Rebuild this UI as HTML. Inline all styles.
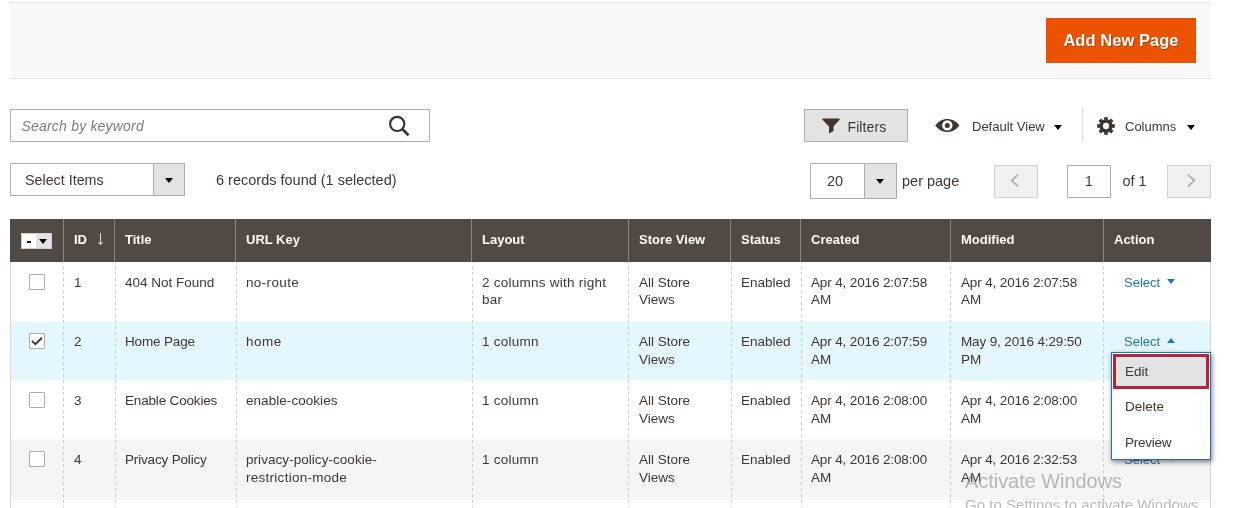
<!DOCTYPE html>
<html>
<head>
<meta charset="utf-8">
<style>
*{box-sizing:border-box;margin:0;padding:0}
html,body{width:1236px;height:508px;overflow:hidden;background:#fff}
body{font-family:"Liberation Sans",sans-serif;font-size:13px;color:#41362f;position:relative}
.abs{position:absolute;white-space:nowrap}
.topbar{left:10px;top:2px;width:1201px;height:77px;background:#f8f8f8;border-top:1px solid #e3e3e3;border-bottom:1px solid #e3e3e3}
.addbtn{left:1046px;top:18px;width:150px;height:45px;background:#eb5202;color:#fff;font-weight:bold;font-size:16.5px;line-height:45px;text-align:center;letter-spacing:.05px;text-shadow:1px 1px 0 rgba(0,0,0,.25)}
.search{left:10px;top:109px;width:420px;height:33px;border:1px solid #adadad;background:#fff}
.search span{position:absolute;left:10.5px;top:8px;font-style:italic;font-size:14px;color:#7f7c7a;letter-spacing:.2px}
.filters{left:804px;top:109px;width:104px;height:33px;background:#e3e3e3;border:1px solid #adadad}
.filters span{position:absolute;left:42.5px;top:8.5px;font-size:14px;color:#41362f;letter-spacing:.1px}
.t13{font-size:13px;color:#41362f}
.sep{left:1082px;top:109px;width:1px;height:33px;background:#dedede}
.selitems{left:10px;top:163px;width:175px;height:33px;border:1px solid #adadad;background:#fff}
.selitems .lbl{position:absolute;left:14px;top:7.5px;font-size:14.3px}
.selitems .car{position:absolute;right:0;top:0;width:31px;height:31px;background:#e3e3e3;border-left:1px solid #adadad}
.pp{left:810px;top:163px;width:87px;height:36px;border:1px solid #adadad;background:#fff}
.pp .lbl{position:absolute;left:16px;top:9px;font-size:14.5px}
.pp .car{position:absolute;right:0;top:0;width:32px;height:34px;background:#e3e3e3;border-left:1px solid #adadad}
.tri{position:absolute;width:0;height:0;border-left:4px solid transparent;border-right:4px solid transparent;border-top:5px solid #000}
.navbtn{top:165px;width:44px;height:33px;background:#f0f0f0;border:1px solid #d0d0d0}
.pginput{left:1067px;top:165px;width:44px;height:33px;border:1px solid #adadad;background:#fff;text-align:center;line-height:31px;font-size:14px}
.thead{left:10px;top:219px;width:1201px;height:43px;background:#514943}
.th{top:219px;height:43px;line-height:41px;color:#fff;font-weight:bold;font-size:13px;border-left:1px solid #8a837f;padding-left:10px}
.row{left:10px;width:1201px;height:59px}
.vline{top:262px;width:1px;height:246px;background:linear-gradient(to bottom,#cbcbcb 0,#cbcbcb 3px,transparent 3px,transparent 6px);background-size:1px 6px;background-position:0 -2px}
.vsolid{top:262px;width:1px;height:246px;background:#d6d6d6}
.c{font-size:13.5px;line-height:17px;color:#41362f;white-space:nowrap}
.cb{left:29px;width:16px;height:16px;border:1px solid #adadad;background:#fff;border-radius:1px}
.link{color:#2273b8;font-size:13px}
.menu{left:1111px;top:352px;width:100px;height:108px;background:#fff;border:1px solid #2270b5;box-shadow:1px 2px 5px rgba(0,0,0,.5)}
.mitem{left:1112px;width:98px;height:35px}
.wm1{left:965px;top:470px;font-size:19.9px;color:rgba(135,135,135,.58)}
.wm2{left:965px;top:496.4px;font-size:15.05px;color:rgba(135,135,135,.58)}
</style>
</head>
<body>
<div id="wrap" style="position:absolute;left:0;top:0;width:1236px;height:508px;will-change:transform">
<div class="abs topbar"></div>
<div class="abs addbtn">Add New Page</div>

<div class="abs search"><span>Search by keyword</span>
<svg style="position:absolute;left:377px;top:5px" width="24" height="24" viewBox="0 0 24 24"><circle cx="9.2" cy="8.9" r="7.1" fill="none" stroke="#41362f" stroke-width="2.2"/><path d="M14.2 14 L20.5 20.3" stroke="#41362f" stroke-width="2.8"/></svg>
</div>

<div class="abs filters"><svg style="position:absolute;left:17px;top:8px" width="18" height="16" viewBox="0 0 18 16"><path d="M0.9 0.6 H17.1 Q18.2 0.8 17.5 1.8 L11.5 8.6 V13 L7 15.4 V8.6 L0.5 1.8 Q-0.2 0.8 0.9 0.6 Z" fill="#41362f"/></svg><span>Filters</span></div>

<svg class="abs" style="left:935px;top:119px" width="25" height="13" viewBox="0 0 25 13"><path d="M0.2 6.5 C3.5 2 8 0 12.3 0 C16.6 0 21 2 24.4 6.5 C21 11 16.6 13 12.3 13 C8 13 3.5 11 0.2 6.5 Z" fill="#41362f"/><circle cx="12.3" cy="6.4" r="5.2" fill="#fff"/><circle cx="12.3" cy="6.4" r="2.5" fill="#41362f"/></svg>
<div class="abs t13" style="left:972px;top:119px">Default View</div>
<div class="tri" style="left:1054px;top:125px"></div>
<div class="abs sep"></div>
<svg class="abs" style="left:1097.3px;top:117px" width="18" height="18" viewBox="0 0 19 19"><g fill="#41362f"><circle cx="9.5" cy="9.5" r="7"/><rect x="7.6" y="0.2" width="3.8" height="18.6"/><rect x="7.6" y="0.2" width="3.8" height="18.6" transform="rotate(45 9.5 9.5)"/><rect x="7.6" y="0.2" width="3.8" height="18.6" transform="rotate(90 9.5 9.5)"/><rect x="7.6" y="0.2" width="3.8" height="18.6" transform="rotate(135 9.5 9.5)"/></g><circle cx="9.5" cy="9.5" r="3.3" fill="#fff"/></svg>
<div class="abs t13" style="left:1125px;top:119px">Columns</div>
<div class="tri" style="left:1187px;top:125px"></div>

<div class="abs selitems"><span class="lbl">Select Items</span><div class="car"><div class="tri" style="left:11px;top:14px"></div></div></div>
<div class="abs" style="left:216px;top:172px;font-size:14.5px">6 records found (1 selected)</div>

<div class="abs pp"><span class="lbl">20</span><div class="car"><div class="tri" style="left:11px;top:15px"></div></div></div>
<div class="abs" style="left:902px;top:172.5px;font-size:14.5px">per page</div>
<div class="abs navbtn" style="left:994px"><svg style="position:absolute;left:15px;top:8px" width="10" height="14" viewBox="0 0 10 14"><path d="M8 0.8 L1.6 6.6 L8 12.4" fill="none" stroke="#a6a6a6" stroke-width="1.5"/></svg></div>
<div class="abs pginput">1</div>
<div class="abs" style="left:1122.5px;top:172.5px;font-size:14.5px">of 1</div>
<div class="abs navbtn" style="left:1167px"><svg style="position:absolute;left:18px;top:8px" width="10" height="14" viewBox="0 0 10 14"><path d="M2 0.8 L8.4 6.6 L2 12.4" fill="none" stroke="#a6a6a6" stroke-width="1.5"/></svg></div>

<!-- rows -->
<div class="abs row" style="top:262px;background:#fff;height:246px"></div>
<div class="abs row" style="top:321px;background:#f4fbfe;height:1px"></div>
<div class="abs row" style="top:322px;background:#e5f7fe;height:58px"></div>
<div class="abs row" style="top:380px;background:#eefafe;height:1px"></div>
<div class="abs row" style="top:439px;background:#fdfdfd;height:1px"></div>
<div class="abs row" style="top:440px;background:#f5f5f5;height:59px"></div>
<div class="abs row" style="top:499px;background:#f6f6f6;height:1px"></div>

<!-- header -->
<div class="abs thead"></div>
<div class="abs" style="left:21px;top:233px;width:31px;height:16px;background:#fff;border:1px solid #d1d1d1"><div style="position:absolute;left:5px;top:7px;width:4px;height:2px;background:#111"></div><div style="position:absolute;left:14px;top:0;width:15px;height:14px;background:#e3e3e3"></div><div class="tri" style="left:17px;top:5px;border-top-color:#000"></div></div>
<svg class="abs" style="left:96px;top:233px" width="9" height="13" viewBox="0 0 9 13"><path d="M4.5 0 V11.5 M2.3 9 L4.5 11.8 L6.7 9" fill="none" stroke="#e0dcda" stroke-width="1"/></svg>
<div class="abs th" style="left:63px;width:51px">ID</div>
<div class="abs th" style="left:114px;width:121px">Title</div>
<div class="abs th" style="left:235px;width:236px">URL Key</div>
<div class="abs th" style="left:471px;width:157px">Layout</div>
<div class="abs th" style="left:628px;width:102px">Store View</div>
<div class="abs th" style="left:730px;width:70px">Status</div>
<div class="abs th" style="left:800px;width:150px">Created</div>
<div class="abs th" style="left:950px;width:153px">Modified</div>
<div class="abs th" style="left:1103px;width:108px">Action</div>

<!-- cells -->
<div class="abs cb" style="top:274px"></div>
<div class="abs c" style="left:74px;top:274px;line-height:17px">1</div>
<div class="abs c" style="left:125px;top:274px;line-height:17px">404 Not Found</div>
<div class="abs c" style="left:246px;top:274px;line-height:17px"><span style="letter-spacing:0.36px">no-route</span></div>
<div class="abs c" style="left:482px;top:274px;line-height:17px"><span style="letter-spacing:0.25px">2 columns with right</span><br><span style="letter-spacing:0.20px">bar</span></div>
<div class="abs c" style="left:639px;top:274px;line-height:17px">All Store<br>Views</div>
<div class="abs c" style="left:741px;top:274px;line-height:17px">Enabled</div>
<div class="abs c" style="left:811px;top:274px;line-height:17px"><span style="letter-spacing:-0.13px">Apr 4, 2016 2:07:58</span><br>AM</div>
<div class="abs c" style="left:961px;top:274px;line-height:17px"><span style="letter-spacing:-0.13px">Apr 4, 2016 2:07:58</span><br>AM</div>
<div class="abs c link" style="left:1124px;top:274px;line-height:17px">Select</div>
<div class="abs cb" style="top:333px"></div>
<div class="abs c" style="left:74px;top:333px;line-height:18px">2</div>
<div class="abs c" style="left:125px;top:333px;line-height:18px"><span style="letter-spacing:-0.15px">Home Page</span></div>
<div class="abs c" style="left:246px;top:333px;line-height:18px"><span style="letter-spacing:0.50px">home</span></div>
<div class="abs c" style="left:482px;top:333px;line-height:18px"><span style="letter-spacing:0.25px">1 column</span></div>
<div class="abs c" style="left:639px;top:333px;line-height:18px">All Store<br>Views</div>
<div class="abs c" style="left:741px;top:333px;line-height:18px">Enabled</div>
<div class="abs c" style="left:811px;top:333px;line-height:18px"><span style="letter-spacing:-0.13px">Apr 4, 2016 2:07:59</span><br>AM</div>
<div class="abs c" style="left:961px;top:333px;line-height:18px"><span style="letter-spacing:-0.13px">May 9, 2016 4:29:50</span><br>PM</div>
<div class="abs c link" style="left:1124px;top:333px;line-height:18px">Select</div>
<div class="abs cb" style="top:392px"></div>
<div class="abs c" style="left:74px;top:392px;line-height:18px">3</div>
<div class="abs c" style="left:125px;top:392px;line-height:18px"><span style="letter-spacing:-0.17px">Enable Cookies</span></div>
<div class="abs c" style="left:246px;top:392px;line-height:18px"><span style="letter-spacing:0.05px">enable-cookies</span></div>
<div class="abs c" style="left:482px;top:392px;line-height:18px"><span style="letter-spacing:0.25px">1 column</span></div>
<div class="abs c" style="left:639px;top:392px;line-height:18px">All Store<br>Views</div>
<div class="abs c" style="left:741px;top:392px;line-height:18px">Enabled</div>
<div class="abs c" style="left:811px;top:392px;line-height:18px"><span style="letter-spacing:-0.13px">Apr 4, 2016 2:08:00</span><br>AM</div>
<div class="abs c" style="left:961px;top:392px;line-height:18px"><span style="letter-spacing:-0.13px">Apr 4, 2016 2:08:00</span><br>AM</div>
<div class="abs c link" style="left:1124px;top:392px;line-height:18px">Select</div>
<div class="abs cb" style="top:451px"></div>
<div class="abs c" style="left:74px;top:451px;line-height:18px">4</div>
<div class="abs c" style="left:125px;top:451px;line-height:18px"><span style="letter-spacing:-0.17px">Privacy Policy</span></div>
<div class="abs c" style="left:246px;top:451px;line-height:18px"><span style="letter-spacing:0.05px">privacy-policy-cookie-</span><br><span style="letter-spacing:0.27px">restriction-mode</span></div>
<div class="abs c" style="left:482px;top:451px;line-height:18px"><span style="letter-spacing:0.25px">1 column</span></div>
<div class="abs c" style="left:639px;top:451px;line-height:18px">All Store<br>Views</div>
<div class="abs c" style="left:741px;top:451px;line-height:18px">Enabled</div>
<div class="abs c" style="left:811px;top:451px;line-height:18px"><span style="letter-spacing:-0.13px">Apr 4, 2016 2:08:00</span><br>AM</div>
<div class="abs c" style="left:961px;top:451px;line-height:18px"><span style="letter-spacing:-0.13px">Apr 4, 2016 2:32:53</span><br>AM</div>
<div class="abs c link" style="left:1124px;top:451px;line-height:18px">Select</div>
<div class="tri" style="left:1167px;top:279px;border-top-color:#1b79c2;border-top-width:5px"></div>
<div class="tri" style="left:1167px;top:338px;border-top:0;border-bottom:5px solid #1b79c2"></div>
<div class="tri" style="left:1167px;top:397px;border-top-color:#1b79c2;border-top-width:5px"></div>
<div class="tri" style="left:1167px;top:456px;border-top-color:#1b79c2;border-top-width:5px"></div>

<svg class="abs" style="left:29px;top:333px" width="16" height="16" viewBox="0 0 16 16"><path d="M2.9 7.9 L6.4 11.1 L12.9 4.7" fill="none" stroke="#3a332e" stroke-width="1.9"/></svg>
<!-- vlines -->
<div class="abs vsolid" style="left:10px"></div>
<div class="abs vline" style="left:63px"></div>
<div class="abs vline" style="left:115px"></div>
<div class="abs vline" style="left:236px"></div>
<div class="abs vline" style="left:472px"></div>
<div class="abs vline" style="left:628px"></div>
<div class="abs vline" style="left:731px"></div>
<div class="abs vline" style="left:801px"></div>
<div class="abs vline" style="left:950px"></div>
<div class="abs vline" style="left:1103px"></div>
<div class="abs vsolid" style="left:1210px"></div>


<!-- dropdown -->
<div class="abs menu"></div>
<div class="abs mitem" style="left:1113px;width:96px;top:354px;height:35px;background:#e3e3e3;border:3px solid #b5243f"></div>
<div class="abs c" style="left:1125px;top:363px">Edit</div>
<div class="abs c" style="left:1125px;top:398px">Delete</div>
<div class="abs c" style="left:1125px;top:434px;letter-spacing:-.25px">Preview</div>
<div class="abs wm1">Activate Windows</div>
<div class="abs wm2">Go to Settings to activate Windows.</div>
</div>
</body>
</html>
